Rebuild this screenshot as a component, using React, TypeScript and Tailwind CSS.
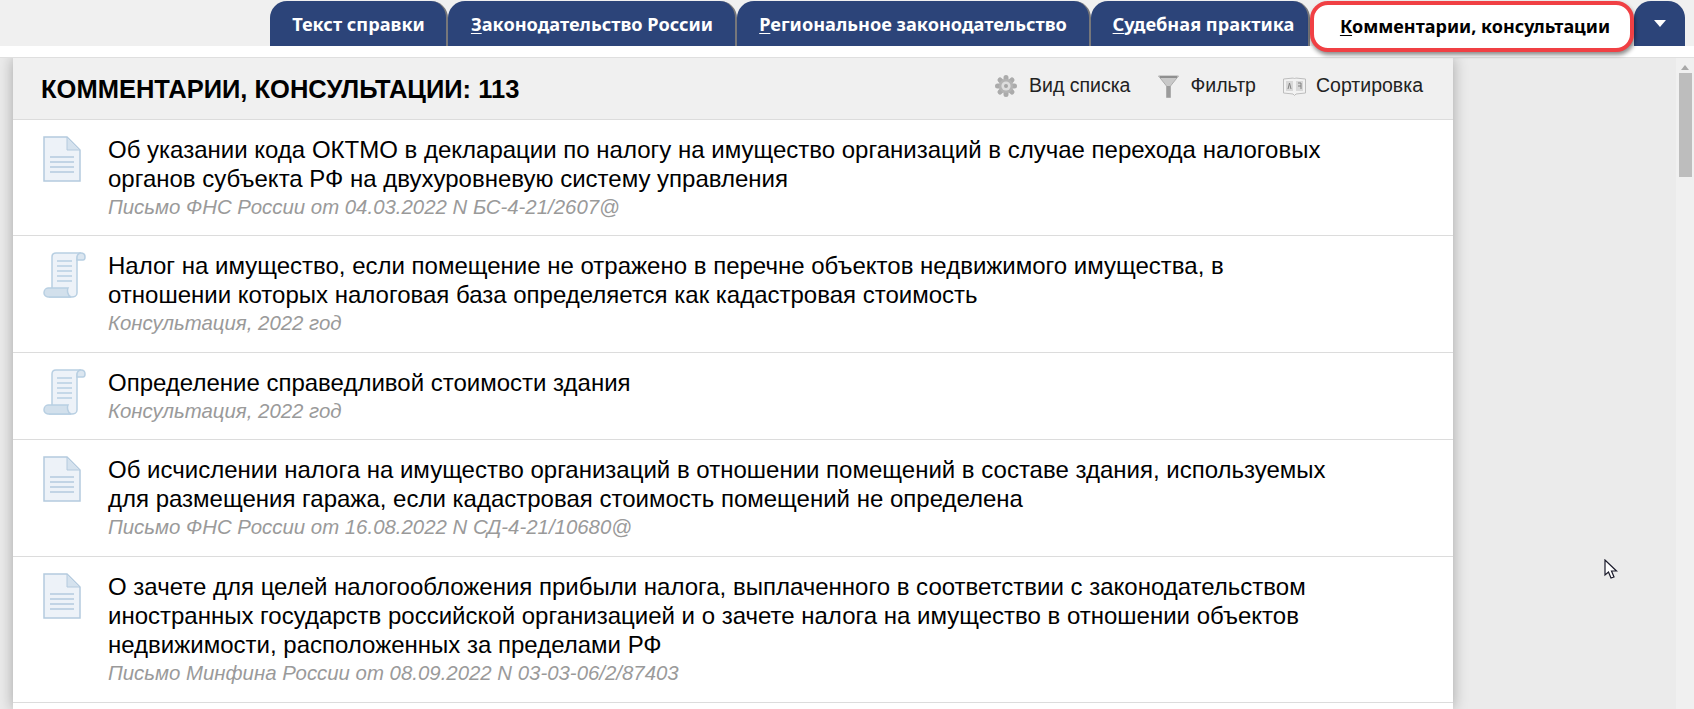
const tabs = [
  { first: "", rest: "Текст справки", width: "w-[178px] pl-[1px]" },
  { first: "З", rest: "аконодательство России", width: "w-[289px] pl-[1px]" },
  { first: "Р", rest: "егиональное законодательство", width: "w-[354px]" },
  { first: "С", rest: "удебная практика", width: "w-[219px] pl-[8px]" },
];

const rows = [
  {
    icon: "doc",
    height: "h-[116px]",
    lines: [
      "Об указании кода ОКТМО в декларации по налогу на имущество организаций в случае перехода налоговых",
      "органов субъекта РФ на двухуровневую систему управления",
    ],
    source: "Письмо ФНС России от 04.03.2022 N БС-4-21/2607@",
  },
  {
    icon: "scroll",
    height: "h-[117px]",
    lines: [
      "Налог на имущество, если помещение не отражено в перечне объектов недвижимого имущества, в",
      "отношении которых налоговая база определяется как кадастровая стоимость",
    ],
    source: "Консультация, 2022 год",
  },
  {
    icon: "scroll",
    height: "h-[87px]",
    lines: ["Определение справедливой стоимости здания"],
    source: "Консультация, 2022 год",
  },
  {
    icon: "doc",
    height: "h-[117px]",
    lines: [
      "Об исчислении налога на имущество организаций в отношении помещений в составе здания, используемых",
      "для размещения гаража, если кадастровая стоимость помещений не определена",
    ],
    source: "Письмо ФНС России от 16.08.2022 N СД-4-21/10680@",
  },
  {
    icon: "doc",
    height: "h-[146px]",
    lines: [
      "О зачете для целей налогообложения прибыли налога, выплаченного в соответствии с законодательством",
      "иностранных государств российской организацией и о зачете налога на имущество в отношении объектов",
      "недвижимости, расположенных за пределами РФ",
    ],
    source: "Письмо Минфина России от 08.09.2022 N 03-03-06/2/87403",
  },
];

function DocIcon() {
  return (
    <svg width="38" height="46" viewBox="0 0 38 46" className="shrink-0">
      <path d="M1 1H24L37 14V45H1Z" fill="#edf2f8" stroke="#b4cade" strokeWidth="1.5" />
      <path d="M24 1V14H37Z" fill="#d5e2ee" stroke="#b4cade" strokeWidth="1" />
      <path d="M7 21H31M7 26H31M7 31H31M7 36H31" stroke="#b4cade" strokeWidth="1.6" />
    </svg>
  );
}

function ScrollIcon() {
  return (
    <svg width="44" height="46" viewBox="0 0 44 46" className="shrink-0">
      <path d="M9 38V5C9 2 11 1 13 1H38C35 2 34 4 34 7V41C34 44 31 45 29 45H6" fill="#edf2f8" stroke="#b8cfe2" strokeWidth="1.5" />
      <path d="M34 8V5C34 3 36 1 38 1C41 1 42 3 42 5C42 7 41 8 40 8Z" fill="#dbe6f0" stroke="#b8cfe2" strokeWidth="1.5" />
      <path d="M1 41C1 38 3 36 5 36H25C24 38 24 43 28 45H5C3 45 1 43 1 41Z" fill="#d2e0ec" stroke="#b8cfe2" strokeWidth="1.5" />
      <path d="M14 9H29M14 14H29M14 19H29M14 24H29M14 29H29" stroke="#b8cfe2" strokeWidth="1.6" />
    </svg>
  );
}

function GearIcon() {
  return (
    <svg width="22" height="22" viewBox="0 0 22 22" className="shrink-0">
      <path d="M11 2.5V19.5M2.5 11H19.5M5 5L17 17M17 5L5 17" stroke="#ababab" strokeWidth="5" strokeLinecap="round" />
      <circle cx="11" cy="11" r="7" fill="#b4b4b4" />
      <circle cx="11" cy="11" r="4.6" fill="#dedede" />
      <circle cx="11" cy="11" r="2" fill="#a6a6a6" />
    </svg>
  );
}

function FunnelIcon() {
  return (
    <svg width="21" height="23" viewBox="0 0 21 23" className="shrink-0">
      <path d="M0.5 1H20.5L12.5 11V22.5H8.5V11Z" fill="#c9c9c9" stroke="#adadad" strokeWidth="1" />
      <path d="M9 11H12V22H9Z" fill="#9b9b9b" />
      <path d="M2 2H19" stroke="#8f8f8f" strokeWidth="2" />
    </svg>
  );
}

function BookIcon() {
  return (
    <svg width="23" height="19" viewBox="0 0 23 19" className="shrink-0">
      <path d="M0.5 2L10.5 1L11.5 2L12.5 1L22.5 2V16L13 17L11.5 18.5L10 17L0.5 16Z" fill="#f2f2f2" stroke="#bdbdbd" strokeWidth="1" />
      <path d="M3 4H10V14H3ZM13 4H20V14H13Z" fill="#d8d8d8" />
      <path d="M5 12L6.5 6L8 12M15 6H18V12M15 9H18" fill="none" stroke="#808080" strokeWidth="1" />
    </svg>
  );
}

export default function App() {
  return (
    <div className="relative flex h-[709px] w-[1694px] flex-col overflow-hidden bg-[#ebebeb] font-['Liberation_Sans',Arial,sans-serif] text-black">
      {/* tab strip */}
      <div className="flex h-[46px] shrink-0 items-end justify-end bg-[#f0f0f0] pr-[9px]">
        {tabs.map((tab) => (
          <div
            key={tab.rest}
            className={`flex h-[45px] ${tab.width} items-center justify-center rounded-t-[17px] border-r-2 border-[#77777a] bg-[#2c4479] pt-[3px] font-['Noto_Sans',sans-serif] text-[18.2px] font-bold text-white`}
          >
            <span>
              <span className="underline underline-offset-2">{tab.first}</span>
              {tab.rest}
            </span>
          </div>
        ))}
        <div className="relative z-10 mb-[-6px] flex h-[51px] w-[324px] items-center justify-center rounded-[18px] border-4 border-[#f04044] bg-white pl-[6px] font-['Noto_Sans',sans-serif] text-[18px] font-bold shadow-[1px_3px_4px_rgba(0,0,0,0.45)]">
          <span>
            <span className="underline underline-offset-2">К</span>омментарии, консультации
          </span>
        </div>
        <div className="flex h-[45px] w-[51px] items-center justify-center rounded-t-[17px] bg-[#2c4479] pb-[1px]">
          <div className="h-0 w-0 border-x-[6px] border-t-[7px] border-x-transparent border-t-white" />
        </div>
      </div>
      <div className="h-[12px] shrink-0 border-b border-[#dfdfdf] bg-white" />

      {/* body */}
      <div className="flex min-h-0 flex-1 overflow-hidden">
        <div className="ml-[13px] w-[1440px] shrink-0 bg-white shadow-[0_0_14px_rgba(0,0,0,0.3)]">
          <div className="flex h-[62px] items-center justify-between border-b border-[#dcdcdc] bg-[#f0f0f0] pl-[28px] pr-[30px]">
            <h1 className="pt-[2px] text-[25.5px] font-bold">КОММЕНТАРИИ, КОНСУЛЬТАЦИИ: 113</h1>
            <div className="flex items-center pb-[5px] text-[19.5px] text-[#222]">
              <GearIcon />
              <span className="ml-[12px]">Вид списка</span>
              <span className="ml-[28px]"><FunnelIcon /></span>
              <span className="ml-[11px]">Фильтр</span>
              <span className="ml-[27px]"><BookIcon /></span>
              <span className="ml-[10px]">Сортировка</span>
            </div>
          </div>
          {rows.map((row) => (
            <div key={row.source + row.lines[0]} className={`flex ${row.height} border-b border-[#dcdcdc] pl-[30px] pt-[15px]`}>
              <div className="w-[65px] shrink-0 pt-[1px]">
                {row.icon === "doc" ? <DocIcon /> : <ScrollIcon />}
              </div>
              <div>
                {row.lines.map((line) => (
                  <div key={line} className="text-[24px] leading-[29px] whitespace-nowrap">{line}</div>
                ))}
                <div className="text-[20.4px] leading-[28px] italic text-[#9a9a9a]">{row.source}</div>
              </div>
            </div>
          ))}
        </div>

        <div className="flex-1" />

        {/* scrollbar */}
        <div className="flex w-[18px] flex-col items-center bg-[#f0f0f0] pt-[7px]">
          <div className="h-0 w-0 border-x-[4px] border-b-[5px] border-x-transparent border-b-[#a8a8a8]" />
          <div className="mt-[3px] h-[104px] w-[13px] bg-[#bdbdbd]" />
        </div>
      </div>

      {/* mouse pointer */}
      <svg width="14" height="21" viewBox="0 0 14 21" className="absolute left-[1604px] top-[559px]">
        <path d="M1 1V16L4.5 13L7 19L10 18L7.5 12H12.5Z" fill="#fff" stroke="#1a1a2a" strokeWidth="1.2" />
      </svg>
    </div>
  );
}
